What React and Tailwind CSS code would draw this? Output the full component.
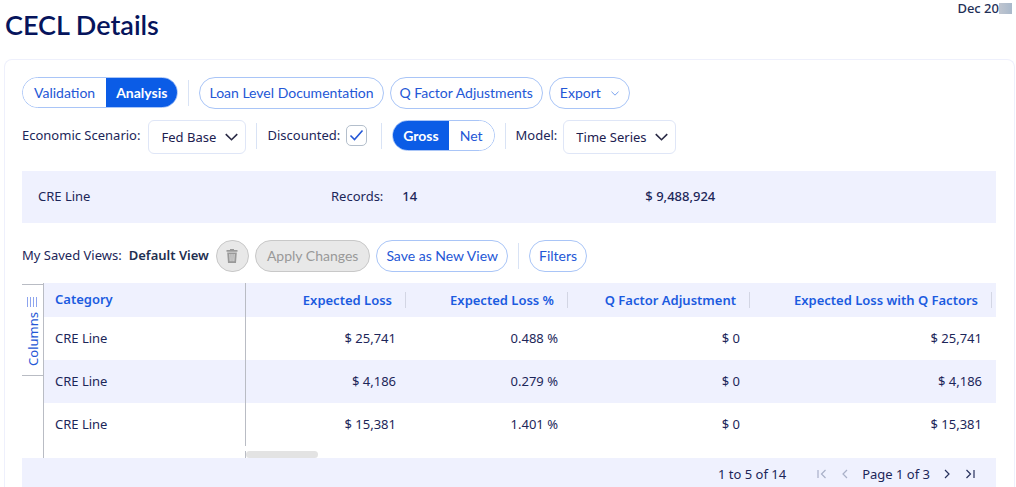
import React, { useState } from 'react';
import clsx from 'clsx';

const rows = [
  { category: 'CRE Line', loss: '$ 25,741', pct: '0.488 %', adj: '$ 0', total: '$ 25,741' },
  { category: 'CRE Line', loss: '$ 4,186', pct: '0.279 %', adj: '$ 0', total: '$ 4,186' },
  { category: 'CRE Line', loss: '$ 15,381', pct: '1.401 %', adj: '$ 0', total: '$ 15,381' },
];

const headers = ['Expected Loss', 'Expected Loss %', 'Q Factor Adjustment', 'Expected Loss with Q Factors'];

const Divider = ({ className }) => <div className={clsx('w-px h-[26px] bg-[#d9e3f5]', className)} />;

const Chevron = ({ className }) => (
  <svg viewBox="0 0 12 7" fill="none" stroke="currentColor" className={className} aria-hidden="true">
    <path d="M0.7 0.8 L6 6 L11.3 0.8" strokeWidth="1.5" />
  </svg>
);

const PillButton = ({ children, disabled, className, ...props }) => (
  <button
    type="button"
    disabled={disabled}
    className={clsx(
      'h-8 rounded-full border font-[Lato,sans-serif] text-[14px] leading-4 whitespace-nowrap',
      disabled ? 'border-[#c8c8c8] bg-[#e8e8e8] text-[#999999]' : 'border-[#a9c5f7] bg-white text-[#2457d6]',
      className
    )}
    {...props}
  >
    {children}
  </button>
);

const Segmented = ({ options, value, onChange }) => (
  <div className="flex h-[31px] overflow-hidden rounded-full border border-[#a9c5f7]">
    {options.map((option) => (
      <button
        key={option}
        type="button"
        aria-pressed={option === value}
        onClick={() => onChange(option)}
        className={clsx(
          'font-[Lato,sans-serif] text-[14px] leading-4',
          option === value ? 'bg-[#0b5ce6] px-[10px] font-bold text-white' : 'bg-white px-[11px] text-[#2457d6]'
        )}
      >
        {option}
      </button>
    ))}
  </div>
);

const Dropdown = ({ id, options, className }) => (
  <div className={clsx('relative', className)}>
    <select
      id={id}
      className="h-[34px] w-full appearance-none rounded-md border border-[#dfe6f7] bg-white pl-3 text-[13px] text-[#1c2050]"
    >
      {options.map((option) => (
        <option key={option}>{option}</option>
      ))}
    </select>
    <Chevron className="pointer-events-none absolute top-[13px] right-2 h-[8px] w-[13px] text-[#2a2a45]" />
  </div>
);

const PageIcon = ({ d, label, disabled }) => (
  <button
    type="button"
    aria-label={label}
    disabled={disabled}
    className={clsx('flex h-4 w-3 items-center justify-center', disabled ? 'text-[#a9b0c8]' : 'text-[#26305c]')}
  >
    <svg width="10" height="10" viewBox="0 0 10 10" fill="none" stroke="currentColor" strokeWidth="1.2">
      <path d={d} />
    </svg>
  </button>
);

const Header = () => (
  <header className="flex h-[59px] items-start justify-between pr-1 pl-[5px]">
    <h1 className="pt-[9px] font-[Lato,sans-serif] text-[27px] leading-8 font-semibold text-[#06145c]">CECL Details</h1>
    <div className="flex items-center text-[13px] leading-4 font-medium text-[#1f2f57]">
      Dec 20
      <span className="h-[11px] w-[13px] bg-linear-to-r from-[#c0c5cf] to-[#a9b9cb]" />
    </div>
  </header>
);

const Toolbar = () => {
  const [tab, setTab] = useState('Analysis');
  const [basis, setBasis] = useState('Gross');
  const [discounted, setDiscounted] = useState(true);

  return (
    <>
      <div className="flex items-start">
        <Segmented options={['Validation', 'Analysis']} value={tab} onChange={setTab} />
        <Divider className="mx-[10px] mt-[3px]" />
        <div className="flex gap-[6px]">
          <PillButton className="px-[9px]">Loan Level Documentation</PillButton>
          <PillButton className="px-[9px]">Q Factor Adjustments</PillButton>
          <PillButton className="flex items-center gap-[10px] px-[10px]">
            Export
            <Chevron className="h-[5px] w-2 text-[#7ba3ee]" />
          </PillButton>
        </div>
      </div>

      <div className="mt-[11px] flex items-start leading-[30px]">
        <label htmlFor="scenario" className="mr-2">Economic Scenario:</label>
        <Dropdown id="scenario" options={['Fed Base']} className="w-[98px]" />
        <Divider className="mx-[10px] mt-[3px]" />
        <label htmlFor="discounted" className="mr-[6px]">Discounted:</label>
        <span className="relative mt-[5px] h-[21px] w-[21px]">
          <input
            id="discounted"
            type="checkbox"
            checked={discounted}
            onChange={(e) => setDiscounted(e.target.checked)}
            className="block h-[21px] w-[21px] appearance-none rounded-[5px] border border-[#b4bfcc] bg-white"
          />
          {discounted && (
            <svg viewBox="0 0 21 21" fill="none" className="pointer-events-none absolute inset-0 text-[#2457d6]">
              <path d="M4.5 10.5 L8.5 14.5 L16.5 5.5" stroke="currentColor" strokeWidth="1.6" />
            </svg>
          )}
        </span>
        <Divider className="mr-[10px] ml-[14px] mt-[3px]" />
        <Segmented options={['Gross', 'Net']} value={basis} onChange={setBasis} />
        <Divider className="mx-[10px] mt-[3px]" />
        <label htmlFor="model" className="mr-[6px]">Model:</label>
        <Dropdown id="model" options={['Time Series']} className="w-[113px]" />
      </div>
    </>
  );
};

const Summary = () => (
  <div className="mt-[17px] flex h-[52px] items-center bg-[#eff1fe] px-4">
    <span className="w-[293px]">CRE Line</span>
    <span className="mr-[19px]">Records:</span>
    <span className="w-[243px] font-medium">14</span>
    <span className="font-medium">$ 9,488,924</span>
  </div>
);

const SavedViews = () => (
  <div className="mt-[17px] flex items-center">
    <span className="mr-[7px]">My Saved Views:</span>
    <span className="mr-[7px] font-semibold text-[#1f2f50]">Default View</span>
    <div className="flex gap-[6px]">
      <PillButton disabled aria-label="Delete view" className="flex w-[33px] items-center justify-center">
        <svg width="12" height="14" viewBox="0 0 12 14" fill="currentColor">
          <path d="M4 0h4v1h3.5v1.8H.5V1H4z" />
          <path fillRule="evenodd" d="M1.2 3.5h9.6L10 14H2zM3.4 5l.3 7.3h.9L4.4 5zm2.1 0v7.3h1V5zm2.1 0l-.2 7.3h.9L8.6 5z" />
        </svg>
      </PillButton>
      <PillButton disabled className="px-[11px]">Apply Changes</PillButton>
      <PillButton className="px-[9px]">Save as New View</PillButton>
    </div>
    <Divider className="mx-[10px]" />
    <PillButton className="px-[9px]">Filters</PillButton>
  </div>
);

const DataGrid = () => (
  <div className="mt-[11px]">
    <div className="flex h-[175px]">
      <div className="w-[22px] shrink-0 border-r border-[#b9bcc4] pt-px">
        <button
          type="button"
          className="flex h-[92px] w-full flex-col items-center gap-[5px] border-y border-[#b9bcc4] pt-3 text-[#2457d6]"
        >
          <svg width="11" height="10" viewBox="0 0 11 10" stroke="#8da4ee" aria-hidden="true">
            <path d="M0.5 0V10M3.5 0V10M6.5 0V10M9.5 0V10" />
          </svg>
          <span className="rotate-180 text-[13px] leading-4 [writing-mode:vertical-rl]">Columns</span>
        </button>
      </div>
      <div className="flex min-w-0 flex-1 flex-col justify-between">
        <table className="w-full table-fixed border-collapse">
          <colgroup>
            <col className="w-[201px]" />
            <col className="w-[161px]" />
            <col className="w-[162px]" />
            <col className="w-[182px]" />
            <col />
            <col className="w-1" />
          </colgroup>
          <thead>
            <tr className="h-[34px] bg-[#eff1fe] text-[#1b5be0]">
              <th className="border-r border-[#b9bcc4] pl-[11px] text-left font-semibold">Category</th>
              {headers.map((header) => (
                <th key={header} className="p-0 font-semibold">
                  <div className="h-4 border-r border-[#d3d6e4] pr-[13px] text-right leading-4 whitespace-nowrap">{header}</div>
                </th>
              ))}
              <td />
            </tr>
          </thead>
          <tbody>
            {rows.map((row, i) => (
              <tr key={i} className="h-[43px] text-right odd:bg-white even:bg-[#eff1fe]">
                <td className="border-r border-[#b9bcc4] pl-[11px] text-left">{row.category}</td>
                <td className="pr-[10px]">{row.loss}</td>
                <td className="pr-[10px]">{row.pct}</td>
                <td className="pr-[10px]">{row.adj}</td>
                <td className="pr-[10px]">{row.total}</td>
                <td />
              </tr>
            ))}
          </tbody>
        </table>
        <div className="ml-[201px] h-[7px] border-l border-[#b9bcc4]">
          <div className="h-full w-[72px] rounded-full bg-[#e3e3e3]" />
        </div>
      </div>
    </div>
    <div className="flex items-center justify-end bg-[#eff1fe] pt-2 pr-5 pb-[5px] leading-4">
      <span className="mr-[30px]">1 to 5 of 14</span>
      <div className="flex items-center gap-[11px]">
        <PageIcon label="First page" disabled d="M1 1V9M8.5 1L4.5 5L8.5 9" />
        <PageIcon label="Previous page" disabled d="M7 1L3 5L7 9" />
        <span>Page 1 of 3</span>
        <PageIcon label="Next page" d="M3 1L7 5L3 9" />
        <PageIcon label="Last page" d="M1.5 1L5.5 5L1.5 9M9 1V9" />
      </div>
    </div>
  </div>
);

export default function App() {
  return (
    <div className="bg-white font-['Noto_Sans',sans-serif] text-[13px] text-[#1c2659]">
      <Header />
      <main className="mr-px ml-1 rounded-t-lg border border-b-0 border-[#eef0fc] pt-[17px] pr-[18px] pl-[17px]">
        <Toolbar />
        <Summary />
        <SavedViews />
        <DataGrid />
      </main>
    </div>
  );
}
